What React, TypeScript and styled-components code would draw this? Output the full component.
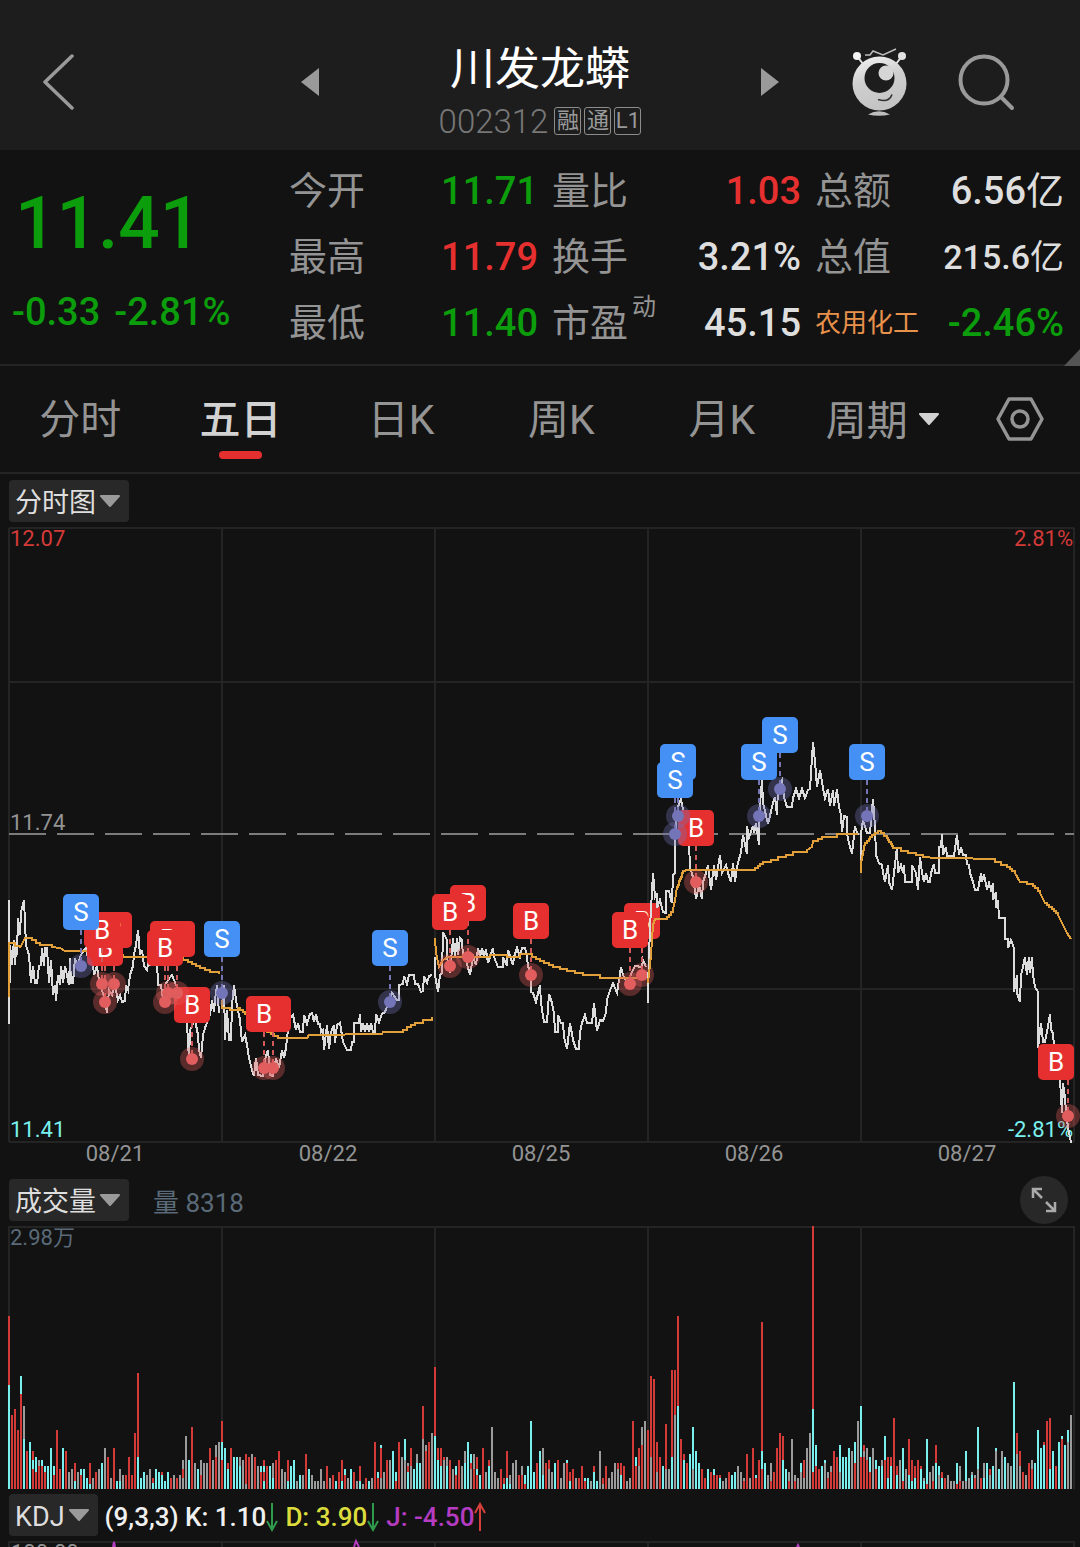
import React from "react";
import styled, { createGlobalStyle } from "styled-components";

const C = {
  bg: "#121212",
  header: "#1d1d1d",
  chip: "#282828",
  line: "#242424",
  muted: "#949494",
  text: "#dedede",
  up: "#e6302f",
  down: "#0c9d0c",
  cyan: "#7af0ee",
  slate: "#5a6a78",
  orange: "#e8914a",
};

const GlobalStyle = createGlobalStyle`
  * { box-sizing: border-box; }
  html, body { margin: 0; padding: 0; background: ${C.bg}; }
  body { font-family: Roboto, "Noto Sans CJK SC", sans-serif; color: ${C.text}; overflow-x: hidden; }
  h1, p, dl, dd, dt { margin: 0; font-weight: inherit; }
  button, select { font: inherit; color: inherit; background: none; border: 0; padding: 0; margin: 0; }
`;

const Page = styled.main`
  width: 100%;
  overflow: hidden;
`;

/* ---------- header ---------- */

const Header = styled.header`
  display: grid;
  grid-template-columns: 5fr 8fr 5fr;
  align-items: center;
  height: 150px;
  padding-top: 14px;
  background: ${C.header};
`;

const IconButton = styled.button`
  display: flex;
  align-items: center;
  justify-content: center;
`;

const BackSlot = styled.div`
  padding-left: 42px;
`;

const Switcher = styled.div`
  display: flex;
  align-items: center;
  justify-content: space-between;
`;

const TitleBlock = styled.div`
  display: flex;
  flex-direction: column;
  align-items: center;
  padding-top: 18px;
`;

const StockName = styled.h1`
  font-size: 45px;
  line-height: 60px;
  font-weight: 400;
  color: #fff;
`;

const CodeRow = styled.div`
  display: flex;
  align-items: center;
  gap: 3px;
  height: 42px;
`;

const Code = styled.span`
  font-size: 33px;
  font-weight: 300;
  color: #777;
  margin-right: 3px;
`;

const Tag = styled.span`
  display: flex;
  align-items: center;
  justify-content: center;
  width: 27px;
  height: 28px;
  border: 1px solid #8c8c8c;
  border-radius: 3px;
  font-size: 22px;
  line-height: 26px;
  color: #9a9a9a;
`;

const Actions = styled.div`
  display: flex;
  align-items: center;
  justify-content: flex-end;
  gap: 50px;
  padding: 2px 64px 0 0;
`;

/* ---------- quote ---------- */

const Quote = styled.section`
  position: relative;
  display: grid;
  grid-template-columns: 289fr 775fr;
  padding: 8px 16px 8px 0;
  height: 216px;
  border-bottom: 2px solid ${C.line};
`;

const PriceBlock = styled.div`
  display: flex;
  flex-direction: column;
  padding-left: 12px;
  color: ${C.down};
`;

const Price = styled.p`
  padding-left: 3px;
  font-size: 73px;
  line-height: 130px;
  font-weight: 500;
`;

const Change = styled.p`
  display: flex;
  gap: 14px;
  font-size: 38px;
  line-height: 48px;
  font-weight: 500;
`;

const Facts = styled.dl`
  display: grid;
  grid-template-columns: 249fr 249fr 249fr;
  grid-auto-rows: 66px;
  column-gap: 14px;
`;

const Fact = styled.div`
  display: flex;
  align-items: center;
  justify-content: space-between;
  white-space: nowrap;
  line-height: 44px;
`;

const FactName = styled.dt<{ $link?: boolean }>`
  position: relative;
  font-size: ${(p) => (p.$link ? 26 : 38)}px;
  color: ${(p) => (p.$link ? C.orange : C.muted)};
`;

const Sup = styled.sup`
  position: absolute;
  left: 100%;
  top: -6px;
  margin-left: 4px;
  font-size: 24px;
  line-height: 24px;
`;

const FactValue = styled.dd<{ $tone?: string; $tight?: boolean }>`
  font-size: ${(p) => (p.$tight ? 34 : 38)}px;
  font-weight: 500;
  color: ${(p) => p.$tone || C.text};
`;

const Unit = styled.span`
  font-weight: 400;
`;

const Corner = styled.svg`
  position: absolute;
  right: 0;
  bottom: -2px;
`;

/* ---------- tabs ---------- */

const Tabs = styled.nav`
  display: flex;
  align-items: stretch;
  height: 108px;
  border-bottom: 2px solid ${C.line};
`;

const Tab = styled.button<{ $active?: boolean }>`
  flex: 161;
  display: flex;
  flex-direction: column;
  align-items: center;
  padding-top: 25px;
  font-size: 41px;
  line-height: 58px;
  font-weight: ${(p) => (p.$active ? 500 : 400)};
  color: ${(p) => (p.$active ? "#d2d2d2" : C.muted)};
  &::after {
    content: "";
    width: 43px;
    height: 8px;
    margin-top: 2px;
    border-radius: 4px;
    background: ${(p) => (p.$active ? C.up : "transparent")};
  }
`;

const PeriodSlot = styled.div`
  flex: 162;
  display: flex;
  justify-content: center;
  padding-top: 24px;
`;

const SettingsSlot = styled.div`
  flex: 113;
  display: flex;
  justify-content: center;
  align-items: center;
  padding-right: 4px;
`;

/* ---------- drop-downs ---------- */

const PickerBox = styled.div<{ $chip?: boolean }>`
  display: flex;
  align-items: center;
  gap: ${(p) => (p.$chip ? 3 : 10)}px;
  height: ${(p) => (p.$chip ? 42 : 58)}px;
  padding: ${(p) => (p.$chip ? "0 8px 0 6px" : "0")};
  border-radius: 4px;
  background: ${(p) => (p.$chip ? C.chip : "transparent")};
  font-size: ${(p) => (p.$chip ? 27 : 41)}px;
  color: ${(p) => (p.$chip ? C.text : C.muted)};
`;

const PickerSelect = styled.select`
  appearance: none;
  height: 100%;
  padding-top: 3px;
  field-sizing: content;
`;

/* ---------- panels ---------- */

const PanelBar = styled.div<{ $top?: boolean }>`
  display: flex;
  align-items: center;
  height: ${(p) => (p.$top ? 51 : 48)}px;
  padding: ${(p) => (p.$top ? "3px" : "0")} 12px 0 9px;
`;

const Volume = styled.span`
  margin-left: 24px;
  font-size: 26px;
  color: ${C.slate};
`;

const ExpandButton = styled.button`
  display: flex;
  align-items: center;
  justify-content: center;
  width: 48px;
  height: 48px;
  margin-left: auto;
  border-radius: 50%;
  background: ${C.chip};
`;

const KdjBar = styled.div`
  display: flex;
  align-items: center;
  padding: 3px 9px 0;
`;

const Reading = styled.span<{ $tone?: string }>`
  display: flex;
  align-items: center;
  margin-left: 7px;
  padding-top: 3px;
  font-size: 26px;
  font-weight: 500;
  white-space: pre;
  color: ${(p) => p.$tone || "#f0f0f0"};
`;

const Chart = styled.svg`
  display: block;
  width: 100%;
  height: auto;
  font-family: Roboto, "Noto Sans CJK SC", sans-serif;
`;

/* ---------- data ---------- */

const GRID_X = [9, 222, 435, 648, 861, 1074];
const DATES = ["08/21", "08/22", "08/25", "08/26", "08/27"];

type Mark = ["B" | "S", number, number];
type Day = { price: string; avg: string; marks: Mark[] };

const DAYS: Day[] = [
  {
    price:
      "9,900 9,1024 10,945 12,965 14,940 15,965 17,935 17,955 18,918 20,935 21,912 24,900 26,945 29,955 31,983 33,966 35,983 37,983 39,966 41,965 42,948 44,966 45,948 47,948 49,983 51,960 53,995 55,985 56,1001 58,975 60,985 61,966 63,983 65,966 67,975 69,985 70,958 71,983 73,983 75,958 77,966 81,955 84,950 86,948 88,958 92,955 94,975 97,966 99,981 102,990 105,1000 107,1013 109,990 112,995 115,985 118,1000 120,995 122,1002 125,1001 126,985 128,990 130,975 133,966 134,955 136,945 138,930 140,955 142,950 144,966 147,970 149,958 150,966 152,948 155,966 157,960 158,985 161,985 163,1000 165,985 168,980 172,975 176,985 180,990 184,1010 187,1024 189,1060 190,1030 192,1026 195,1020 198,1035 199,1050 201,1058 203,1035 205,1028 208,1020 210,1015 212,1000 214,1012 215,1000 217,985 219,1013",
    avg: "9,997 9,943 20,948 25,938 32,940 40,945 52,947 60,948 65,951 83,951 100,953 123,957 147,957 165,957 183,960 192,964 200,968 210,972 219,974",
    marks: [["S", 81, 966], ["B", 102, 984], ["B", 105, 1002], ["B", 114, 984], ["B", 165, 1002], ["B", 168, 993], ["B", 177, 993], ["B", 192, 1059]],
  },
  {
    price:
      "222,985 223,1000 224,985 225,1040 227,1010 229,1040 231,1040 232,1005 234,985 236,1000 238,1010 240,1020 242,1042 245,1035 247,1045 249,1058 252,1070 254,1076 256,1058 258,1075 263,1076 266,1055 268,1050 270,1075 273,1076 276,1058 279,1068 282,1050 284,1058 286,1048 288,1030 290,1018 293,1015 296,1030 298,1023 300,1032 303,1032 304,1015 307,1024 310,1014 312,1013 314,1022 316,1014 318,1024 320,1024 321,1032 323,1030 324,1050 327,1025 329,1049 331,1032 334,1025 335,1043 337,1025 340,1023 343,1042 347,1050 351,1050 352,1042 354,1042 354,1023 359,1023 360,1014 361,1032 363,1023 365,1032 367,1023 369,1032 371,1023 373,1032 375,1032 376,1014 379,1022 382,1014 385,1012 388,1004 392,993 397,1000 399,1000 399,985 403,984 404,976 407,984 409,975 414,975 415,984 418,984 421,992 423,991 424,976 427,983 429,976 432,975",
    avg: "222,1000 222,1008 230,1010 238,1008 245,1014 257,1023 267,1032 278,1038 307,1038 309,1035 382,1034 383,1032 398,1032 407,1027 415,1023 423,1020 432,1017",
    marks: [["S", 222, 993], ["B", 264, 1068], ["B", 273, 1068], ["S", 390, 1002]],
  },
  {
    price:
      "435,957 435,975 438,992 440,975 442,973 443,932 447,940 447,957 450,973 453,938 455,957 457,938 458,955 460,938 462,940 463,957 466,960 470,975 473,957 476,965 478,948 480,957 482,948 484,957 486,949 488,963 493,948 494,957 498,967 503,967 503,957 507,966 508,950 513,965 514,957 517,948 520,957 522,948 525,948 527,957 528,966 531,975 531,992 533,993 536,1002 540,985 541,1003 544,1022 547,1022 549,994 552,1003 554,1013 555,1032 558,1032 558,1015 561,1023 563,1023 564,1037 567,1049 570,1023 573,1040 576,1049 579,1049 580,1032 582,1023 585,1015 587,1023 592,1023 594,1003 597,1031 600,1020 603,1021 606,1013 607,1000 609,993 613,983 617,993 621,967 623,975 627,983 633,970 635,966 642,967 643,960 646,967",
    avg: "435,938 436,953 439,967 443,960 448,957 463,955 473,957 490,955 507,957 520,954 532,957 540,961 553,967 567,971 583,975 600,978 646,978",
    marks: [["B", 450, 966], ["B", 468, 957], ["B", 531, 975], ["B", 630, 984], ["B", 642, 975]],
  },
  {
    price:
      "648,1003 648,987 650,927 653,873 655,897 657,893 657,908 660,900 663,912 666,913 666,891 669,891 671,900 672,903 673,875 675,873 675,833 678,807 681,799 683,810 687,833 689,843 690,867 693,877 696,899 699,885 702,899 703,882 706,873 708,865 711,890 714,865 716,880 720,855 722,873 726,865 728,873 731,882 733,863 735,882 737,867 741,852 743,835 747,854 747,826 749,837 753,826 754,833 756,823 759,845 759,817 762,780 763,803 768,824 773,803 775,797 777,815 778,787 782,780 784,797 787,807 792,807 793,798 796,789 799,798 802,789 805,798 808,790 810,789 813,742 815,762 817,787 820,770 823,788 825,798 828,789 830,806 833,790 834,806 837,789 839,807 841,815 842,832 844,816 847,817 847,833 849,843 852,854 855,826 857,833 859,835",
    avg: "648,983 651,955 652,940 653,925 655,919 667,917 673,910 675,900 677,887 683,871 688,870 752,870 763,862 778,857 793,852 807,850 812,847 813,841 822,837 837,834 858,834",
    marks: [["S", 675, 834], ["S", 678, 816], ["B", 696, 882], ["S", 759, 816], ["S", 780, 789]],
  },
  {
    price:
      "861,873 861,833 862,827 863,820 867,833 870,833 873,799 875,827 876,855 879,863 882,865 883,873 885,882 888,865 889,882 892,890 894,873 897,847 898,873 901,865 903,873 904,865 905,882 912,882 912,865 916,873 918,890 920,857 922,873 924,882 926,873 928,882 930,882 931,873 934,864 935,873 939,873 939,847 941,847 942,834 943,855 946,847 947,856 954,856 957,835 959,855 961,847 963,855 966,855 967,864 969,865 970,873 973,882 975,890 978,890 981,873 982,882 984,874 987,890 989,883 991,890 993,883 993,900 996,892 996,908 998,900 999,918 1005,918 1005,939 1008,939 1008,948 1011,940 1014,948 1014,992 1017,975 1017,993 1020,1002 1021,975 1023,967 1025,957 1027,975 1029,957 1030,973 1032,957 1033,975 1035,987 1038,992 1038,1048 1041,1023 1043,1042 1045,1042 1047,1032 1050,1014 1051,1030 1053,1033 1054,1047 1060,1080 1062,1113 1063,1083 1065,1097 1066,1113 1068,1127 1071,1143",
    avg: "861,873 861,863 865,843 872,835 878,831 887,838 893,848 908,853 923,857 937,858 965,858 980,859 995,862 1007,867 1015,873 1020,882 1033,886 1040,893 1045,903 1058,915 1062,923 1067,933 1071,939",
    marks: [["S", 867, 816], ["B", 1068, 1116]],
  },
];

/* One token per 3px column: colour letter + height, stacked back to front. */
const VOLUMES = (
  "r173c104 r74 r80 r59 c113r95 g83c50 r38 c47 r38c29r20 c32r17 g29r23 c29r23 c23r17 c23 c41 c23r14 r59 r20 c41 r38 g17 g20 r26c8 g17 c20r14 c20 c11 r26c5 g11 r17 g20 c26 g41 r32 g11 r41 c8 g20c8 g14 r14 r32 r14 r56 r116c32 c11 c17 g14 g20 r11c6 c20 c17 r17c14 c8 c17 r11 g14 r11 g14 g29r20g11 g53 c29 r62 g26 c20 g29r14 g26 g26 r41 g29 g44r32 g47 " +
  "r68c47r29 c41 r26c20 r41 c32 c32 g32c23 g29 r35g5 r32 g35 r32 g23 c23r17 r29c23r17c8 r23 c23 g26c11 r29 r38 g20 g17 r29c8 c23 c29 g8 c14 g14 r35 c20 g14 g8 g8 g20 g8 r23 g11 r14 c8 r17 r29c8 c20r14 g11 c20 r17 g8 r23c8 g5 r11 c8 g11 r47 c17r11 c44r41g11 g17 r29 g29 c38 c17r8 r47 g32 c50g29 g26r23c17 r41g23 c20 g35c26 c26 r83g50 g44r38 r47 g56 " +
  "r122c53 r41c29 r41c23 r32g29 g32c23 r29 g20 c23r14 r29 g23 g38c26 c47 c35r26g20 g35r20 r32c20r14 c14 r41 g17 r29c23 g62 g17 g11 r20 r11c5 r38c11 g14c5 g26 g29 r14 g23r14 c14r5 c23 c68 c17 r26 c38 g41c14 r26 r29g20 g17 c26 r29 g11 g26 c29r26 r17c8 r20 g11 r11 r23 c11r8 c11 g8 r23c17 c8 g38 r11g5 r23 g11 g17 g26 r26g20 r26c14 r23 g8 g11 r68 c32r23 r41g23 g62r44 g68 " +
  "r59 r113g32 r110 r47g17 r32 c23 r65g20 g20 r119c32 r119g74 r173c83 r50 r35c29 r26 c35 c62g20 c38 c26 r20 r11 c20 r17 c20r14 r14 r14c11 g8 g11 r17 c14 c17 g23 g17 g11r8 r35 g11 r41 c14r11 r29 r167c38r20 c26 g14 g26r8 r17 r41 r56 r53c29 c20 g17r8 g50 g14r8 g11 c26g17 r29g11 g41 g56 r263c80r17 c44r23 r20 c23 c29g26 g17r11 g23r17 r38 r32 c44g17 c32 c32 c41 g38 c47r26 g68 " +
  "c83r32 r44g38r32 g41r29 c32r17 g41 c29r20 c23 g29c23 c53r29 r32c11 r32c23 r71 r23c14 g29 c41r8 g20 r50c14 r29c8 r23c11 r29 r23c20 g11c8 c50r5 g17 g23r8 r44c26 c23g14 r17c11 r11 g14 g8 g8 c26r5 g23r8 g8 c38g8 g11 g17c14 g14r11 c62g20 r11 g26c11 c26 r20g14 c23 c41g38 c20 g38 c32 g26 g23 c107 r56g35 r38g23 r17 g14 r26 g29r20 c26 c59 c41 r47c44 r68 r71c20 c38 r23 c47 c53r50 c44 c59g47 g74"
).split(" ");

const BAR_COLORS: Record<string, string> = { r: "#d43a38", c: C.cyan, g: "#9b9b9b" };

const TICK = 2;
const toSteps = (points: string) => {
  const pts = points.split(" ").map((p) => p.split(",").map(Number));
  let d = `M${pts[0][0]} ${pts[0][1]}`;
  for (let i = 1; i < pts.length; i++) {
    const [x0, y0] = pts[i - 1];
    const [x1, y1] = pts[i];
    const n = Math.floor(Math.abs(y1 - y0) / TICK);
    if (x1 - x0 >= 6 && n > 0) {
      for (let k = 1; k <= n; k++) {
        d += `H${Math.round(x0 + ((x1 - x0) * k) / n)}V${Math.round(y0 + ((y1 - y0) * k) / n)}`;
      }
    } else {
      d += `L${x1} ${y1}`;
    }
  }
  return d;
};

/* ---------- drawings ---------- */

const Caret = ({ fill }: { fill: string }) => (
  <svg width="22" height="12" viewBox="0 0 22 12" aria-hidden="true">
    <path d="M2 1H20L11 11Z" fill={fill} stroke={fill} strokeWidth="2" strokeLinejoin="round" />
  </svg>
);

const Triangle = ({ flip }: { flip?: boolean }) => (
  <svg width="20" height="28" viewBox="0 0 20 28" aria-hidden="true">
    <path d={flip ? "M1 0L19 14L1 28Z" : "M19 0L1 14L19 28Z"} fill="#9a9a9a" />
  </svg>
);

const Robot = () => (
  <svg width="56" height="70" viewBox="852 48 56 70" aria-hidden="true">
    <defs>
      <linearGradient id="shell" x1="0" y1="0" x2="0.3" y2="1">
        <stop offset="0" stopColor="#f4f4f4" />
        <stop offset="0.5" stopColor="#cfcfcf" />
        <stop offset="1" stopColor="#c4c4c4" />
      </linearGradient>
    </defs>
    <path d="M857 56L863 64M902 56L896 64" stroke="#e6e6e6" strokeWidth="2" />
    <circle cx="857" cy="56" r="4" fill="#f4f4f4" />
    <circle cx="902" cy="56" r="4" fill="#e2e2e2" />
    <path d="M865 55H870L873 51L883 55L896 49" fill="none" stroke="#bdbdbd" strokeWidth="1.5" />
    <circle cx="879.5" cy="83.5" r="27" fill="url(#shell)" />
    <circle cx="879.5" cy="78" r="15" fill={C.header} />
    <circle cx="886" cy="73" r="7.5" fill="#d6d6d6" />
    <path d="M878 99.5Q889 103 892 94.5" fill="none" stroke="#333" strokeWidth="1.6" />
    <path d="M868 114.5Q879 108 890 114.5Q879 117 868 114.5Z" fill="#bdbdbd" />
  </svg>
);

const TrendArrow = ({ up }: { up?: boolean }) => (
  <svg width="12" height="30" viewBox="0 0 12 30" aria-hidden="true">
    <path
      d={up ? "M6 29V2M1 11L6 2L11 11" : "M6 1V28M1 19L6 28L11 19"}
      fill="none"
      stroke={up ? "#d6403a" : "#2f9a4c"}
      strokeWidth="2"
    />
  </svg>
);

const Picker = ({ label, options, chip }: { label: string; options: string[]; chip?: boolean }) => (
  <PickerBox $chip={chip}>
    <PickerSelect aria-label={label} defaultValue={options[0]}>
      {options.map((o) => (
        <option key={o}>{o}</option>
      ))}
    </PickerSelect>
    <Caret fill={chip ? "#9a9a9a" : "#d2d2d2"} />
  </PickerBox>
);

const Marker = ({ mark: [kind, x, y] }: { mark: Mark }) => {
  const buy = kind === "B";
  const bx = Math.min(x, 1056);
  return (
    <g>
      <line x1={x} x2={x} y1={y - 36} y2={y - 6} stroke={buy ? "#d05a5a" : "#7676b4"} strokeWidth="2" strokeDasharray="5 4" />
      <circle cx={x} cy={y} r="12" fill={buy ? "#e05c5c" : "#7272b8"} opacity="0.35" />
      <circle cx={x} cy={y} r="6" fill={buy ? "#e25d5d" : "#7474b8"} />
      <rect x={bx - 18} y={y - 72} width="36" height="36" rx="5" fill={buy ? C.up : "#4490f4"} />
      <text x={bx} y={y - 45} fontSize="26" textAnchor="middle" fill="#fff">
        {kind}
      </text>
    </g>
  );
};

const PriceChart = () => (
  <Chart viewBox="0 525 1080 651" role="img" aria-label="五日分时走势">
    <g stroke={C.line} strokeWidth="2">
      {GRID_X.map((x) => (
        <line key={x} x1={x} x2={x} y1="528" y2="1142" />
      ))}
      {[528, 682, 989, 1142].map((y) => (
        <line key={y} x1="9" x2="1074" y1={y} y2={y} />
      ))}
    </g>
    <line x1="9" x2="1074" y1="834" y2="834" stroke="#7c7c7c" strokeWidth="2" strokeDasharray="37 11" />
    <g fontSize="22">
      <text x="10" y="546" fill="#d43a38">12.07</text>
      <text x="1073" y="546" textAnchor="end" fill="#d43a38">2.81%</text>
      <text x="10" y="830" fill={C.muted}>11.74</text>
      <text x="10" y="1137" fill={C.cyan}>11.41</text>
      <text x="1073" y="1137" textAnchor="end" fill={C.cyan}>-2.81%</text>
    </g>
    <g fontSize="22" fill={C.muted} textAnchor="middle">
      {DATES.map((d, i) => (
        <text key={d} x={115 + i * 213} y="1161">{d}</text>
      ))}
    </g>
    {DAYS.map((day, i) => (
      <g key={i}>
        <g fill="none" strokeWidth="2" shapeRendering="crispEdges">
          <polyline points={day.price} stroke="#dcdcdc" strokeWidth="2" />
          <path d={toSteps(day.avg)} stroke="#e2a03a" />
        </g>
        {[...day.marks].reverse().map((m) => (
          <Marker key={m.join()} mark={m} />
        ))}
      </g>
    ))}
  </Chart>
);

const VolumeChart = () => (
  <Chart viewBox="0 1224 1080 267" role="img" aria-label="成交量">
    <g stroke={C.line} strokeWidth="2">
      {GRID_X.map((x) => (
        <line key={x} x1={x} x2={x} y1="1227" y2="1489" />
      ))}
      <line x1="8" x2="1075" y1="1227" y2="1227" />
    </g>
    <text x="10" y="1245" fontSize="22" fill={C.slate}>2.98万</text>
    <g shapeRendering="crispEdges">
      {VOLUMES.flatMap((token, i) =>
        (token.match(/[rcg]\d+/g) || []).map((part, j) => {
          const h = Number(part.slice(1));
          return <rect key={`${i}-${j}`} x={8 + i * 3} y={1489 - h} width="2" height={h} fill={BAR_COLORS[part[0]]} />;
        })
      )}
    </g>
  </Chart>
);

const KdjChart = () => (
  <Chart viewBox="0 1536 1080 11" role="img" aria-label="KDJ">
    <g stroke={C.line} strokeWidth="2">
      <line x1="8" x2="1075" y1="1542" y2="1542" />
      {GRID_X.map((x) => (
        <line key={x} x1={x} x2={x} y1="1542" y2="1547" />
      ))}
    </g>
    <text x="11" y="1560" fontSize="22" fill={C.muted}>100.00</text>
    <path d="M113 1547L114 1542L115 1547M354 1547L356 1541L359 1547M797 1547L798 1545L799 1547" fill="none" stroke="#b53cc0" strokeWidth="2" />
  </Chart>
);

type FactRow = { name: string; value: string; tone?: string; unit?: string; sup?: string; link?: boolean; tight?: boolean };

const FACTS: FactRow[] = [
  { name: "今开", value: "11.71", tone: C.down },
  { name: "量比", value: "1.03", tone: C.up },
  { name: "总额", value: "6.56", unit: "亿" },
  { name: "最高", value: "11.79", tone: C.up },
  { name: "换手", value: "3.21%" },
  { name: "总值", value: "215.6", unit: "亿", tight: true },
  { name: "最低", value: "11.40", tone: C.down },
  { name: "市盈", value: "45.15", sup: "动" },
  { name: "农用化工", value: "-2.46%", tone: C.down, link: true },
];

export default function App() {
  return (
    <Page>
      <GlobalStyle />
      <Header>
        <BackSlot>
          <IconButton aria-label="返回">
            <svg width="32" height="56" viewBox="0 0 32 56" aria-hidden="true">
              <path d="M30 2L3 28L30 54" fill="none" stroke="#9a9a9a" strokeWidth="3.5" strokeLinecap="round" strokeLinejoin="round" />
            </svg>
          </IconButton>
        </BackSlot>
        <Switcher>
          <IconButton aria-label="上一只"><Triangle /></IconButton>
          <TitleBlock>
            <StockName>川发龙蟒</StockName>
            <CodeRow>
              <Code>002312</Code>
              <Tag>融</Tag>
              <Tag>通</Tag>
              <Tag>L1</Tag>
            </CodeRow>
          </TitleBlock>
          <IconButton aria-label="下一只"><Triangle flip /></IconButton>
        </Switcher>
        <Actions>
          <IconButton aria-label="助手"><Robot /></IconButton>
          <IconButton aria-label="搜索">
            <svg width="58" height="58" viewBox="0 0 58 58" aria-hidden="true">
              <circle cx="26" cy="26" r="23.5" fill="none" stroke="#999" strokeWidth="4" />
              <path d="M43 43L54 54" stroke="#999" strokeWidth="4" strokeLinecap="round" />
            </svg>
          </IconButton>
        </Actions>
      </Header>

      <Quote>
        <PriceBlock>
          <Price>11.41</Price>
          <Change>
            <span>-0.33</span>
            <span>-2.81%</span>
          </Change>
        </PriceBlock>
        <Facts>
          {FACTS.map((f) => (
            <Fact key={f.name}>
              <FactName $link={f.link}>
                {f.name}
                {f.sup && <Sup>{f.sup}</Sup>}
              </FactName>
              <FactValue $tone={f.tone} $tight={f.tight}>
                {f.value}
                {f.unit && <Unit>{f.unit}</Unit>}
              </FactValue>
            </Fact>
          ))}
        </Facts>
        <Corner width="16" height="17" viewBox="0 0 16 17" aria-hidden="true">
          <path d="M16 0V17H0Z" fill="#555" />
        </Corner>
      </Quote>

      <Tabs>
        <Tab>分时</Tab>
        <Tab $active aria-current="true">五日</Tab>
        <Tab>日K</Tab>
        <Tab>周K</Tab>
        <Tab>月K</Tab>
        <PeriodSlot>
          <Picker label="选择周期" options={["周期"]} />
        </PeriodSlot>
        <SettingsSlot>
          <IconButton aria-label="设置">
            <svg width="48" height="44" viewBox="0 0 48 44" aria-hidden="true">
              <path d="M13 2H35L46 22L35 42H13L2 22Z" fill="none" stroke="#949494" strokeWidth="3.5" strokeLinejoin="round" />
              <circle cx="24" cy="22" r="8" fill="none" stroke="#949494" strokeWidth="3.5" />
            </svg>
          </IconButton>
        </SettingsSlot>
      </Tabs>

      <PanelBar $top>
        <Picker chip label="主图" options={["分时图"]} />
      </PanelBar>
      <PriceChart />

      <PanelBar>
        <Picker chip label="副图一" options={["成交量"]} />
        <Volume>量 8318</Volume>
        <ExpandButton aria-label="全屏">
          <svg width="26" height="26" viewBox="0 0 26 26" aria-hidden="true">
            <path d="M2 11V2H11M2 2L11 11M24 15V24H15M24 24L15 15" fill="none" stroke="#aaa" strokeWidth="2.5" />
          </svg>
        </ExpandButton>
      </PanelBar>
      <VolumeChart />

      <KdjBar>
        <Picker chip label="副图二" options={["KDJ"]} />
        <Reading>(9,3,3) K: 1.10<TrendArrow /></Reading>
        <Reading $tone="#dcdc3c">D: 3.90<TrendArrow /></Reading>
        <Reading $tone="#b53cc0">J: -4.50<TrendArrow up /></Reading>
      </KdjBar>
      <KdjChart />
    </Page>
  );
}
